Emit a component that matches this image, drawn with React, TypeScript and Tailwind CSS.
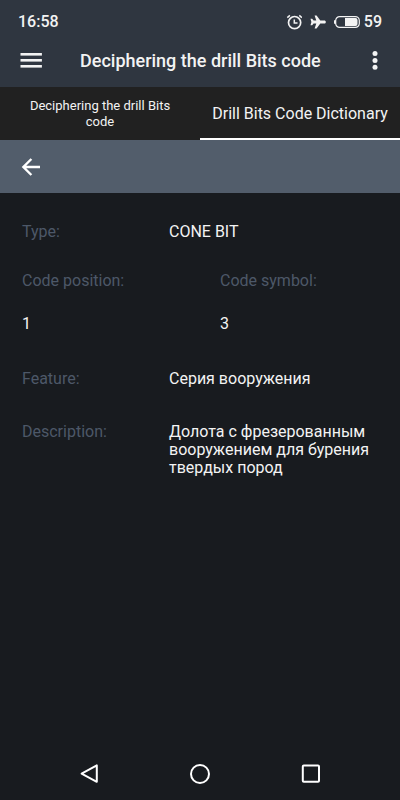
import React from 'react';

interface IconProps {
  className?: string;
}

const AlarmIcon: React.FC<IconProps> = ({ className }) => (
  <svg className={className} viewBox="0 0 16 16" fill="none" stroke="currentColor">
    <circle cx="8.6" cy="8.6" r="6.1" strokeWidth="1.7" />
    <path d="M8.3 5.4v3.7h3.2" strokeWidth="1.5" />
    <path d="M1.3 3.6L3.9 1.4M15.9 3.6L13.3 1.4" strokeWidth="1.5" />
  </svg>
);

const PlaneIcon: React.FC<IconProps> = ({ className }) => (
  <svg className={className} viewBox="0 0 16 14" fill="currentColor">
    <path d="M15.8 7c0-1-.6-1.5-1.5-1.5h-4L6.6.5H4.6l1.7 5H3.6L2.2 3.8H.5L1.4 7l-.9 3.2h1.7l1.4-1.7h2.7l-1.7 5h2l3.7-5h4c.9 0 1.5-.5 1.5-1.5z" />
  </svg>
);

const BatteryIcon: React.FC<IconProps> = ({ className }) => (
  <svg className={className} viewBox="0 0 26 12" fill="none">
    <rect x="1.7" y="0.6" width="23.6" height="10.8" rx="4" stroke="currentColor" strokeWidth="1.2" />
    <rect x="0" y="4" width="2" height="4" rx="1" fill="currentColor" />
    <path d="M11 2h10.5a2 2 0 0 1 2 2v4a2 2 0 0 1-2 2H11z" fill="currentColor" />
  </svg>
);

const MenuIcon: React.FC<IconProps> = ({ className }) => (
  <svg className={className} viewBox="0 0 22 16" fill="currentColor">
    <rect x="0.5" y="0" width="21.4" height="2.6" />
    <rect x="0.5" y="6" width="21.4" height="2.6" />
    <rect x="0.5" y="12" width="21.4" height="2.6" />
  </svg>
);

const MoreIcon: React.FC<IconProps> = ({ className }) => (
  <svg className={className} viewBox="0 0 6 20" fill="currentColor">
    <circle cx="3" cy="2.6" r="2.5" />
    <circle cx="3" cy="9.4" r="2.5" />
    <circle cx="3" cy="16.2" r="2.5" />
  </svg>
);

const ArrowBackIcon: React.FC<IconProps> = ({ className }) => (
  <svg className={className} viewBox="0 0 20 18" fill="none" stroke="currentColor" strokeWidth="2.4">
    <path d="M19 9H2.4M10.4 1L2.4 9l8 8" />
  </svg>
);

const Field: React.FC<{ label: string; value: string }> = ({ label, value }) => (
  <div className="flex">
    <dt className="w-[147px] shrink-0 text-[#4d5868]">{label}</dt>
    <dd className="flex-1">{value}</dd>
  </div>
);

const StatusBar: React.FC = () => (
  <div className="flex h-10 items-center justify-between px-[18px] pt-1 text-base font-medium">
    <span>16:58</span>
    <div className="flex items-center">
      <AlarmIcon className="mr-2 h-4 w-4" />
      <PlaneIcon className="mr-2 h-[14px] w-4" />
      <BatteryIcon className="mr-1 h-3 w-[26px]" />
      <span>59</span>
    </div>
  </div>
);

const App: React.FC = () => {
  return (
    <div className="flex min-h-screen flex-col bg-[#181b1f] font-['Roboto',sans-serif] text-[#f3f3f3]">
      <header className="bg-[#2f3640]">
        <StatusBar />
        <div className="flex h-[47px] items-center px-5 pb-[6px]">
          <button aria-label="Menu" className="flex h-10 w-[60px] items-center">
            <MenuIcon className="h-4 w-[22px]" />
          </button>
          <h1 className="flex-1 text-lg font-medium">Deciphering the drill Bits code</h1>
          <button aria-label="More options" className="flex h-10 items-center">
            <MoreIcon className="mr-[2px] h-5 w-[6px]" />
          </button>
        </div>
      </header>

      {/* Tabs */}
      <nav className="grid h-[53px] grid-cols-2 bg-[#212121]">
        <button className="px-6 text-[13px] leading-4">Deciphering the drill Bits code</button>
        <button className="whitespace-nowrap border-b-2 border-white pt-[2px] text-base">Drill Bits Code Dictionary</button>
      </nav>

      {/* Back bar */}
      <div className="flex h-[53px] items-center bg-[#525d6b] px-[21px]">
        <button aria-label="Back" className="text-white">
          <ArrowBackIcon className="h-[18px] w-5" />
        </button>
      </div>

      <dl className="flex-1 px-[22px] pt-[30px] text-base leading-[18px]">
        <Field label="Type:" value="CONE BIT" />
        <div className="mb-[37px] mt-[31px] flex">
          <div className="w-[198px]">
            <dt className="text-[#4d5868]">Code position:</dt>
            <dd className="mt-[25px]">1</dd>
          </div>
          <div>
            <dt className="text-[#4d5868]">Code symbol:</dt>
            <dd className="mt-[25px]">3</dd>
          </div>
        </div>
        <Field label="Feature:" value="Серия вооружения" />
        <div className="mt-[35px]">
          <Field label="Description:" value="Долота с фрезерованным вооружением для бурения твердых пород" />
        </div>
      </dl>

      {/* System navigation */}
      <footer className="flex h-[53px] items-center justify-center gap-[90px] text-white">
        <button aria-label="System back">
          <svg className="h-5 w-5" viewBox="0 0 20 20" fill="none" stroke="currentColor" strokeWidth="2" strokeLinejoin="round">
            <path d="M1.6 9.6L16.8 1.4v16.4z" />
          </svg>
        </button>
        <button aria-label="Home">
          <svg className="h-5 w-5" viewBox="0 0 20 20" fill="none" stroke="currentColor" strokeWidth="2">
            <circle cx="10" cy="10" r="9" />
          </svg>
        </button>
        <button aria-label="Recent apps">
          <svg className="h-5 w-5" viewBox="0 0 20 20" fill="none" stroke="currentColor" strokeWidth="2">
            <rect x="2.8" y="1.4" width="16.2" height="16.4" rx="1" />
          </svg>
        </button>
      </footer>
    </div>
  );
};

export default App;
